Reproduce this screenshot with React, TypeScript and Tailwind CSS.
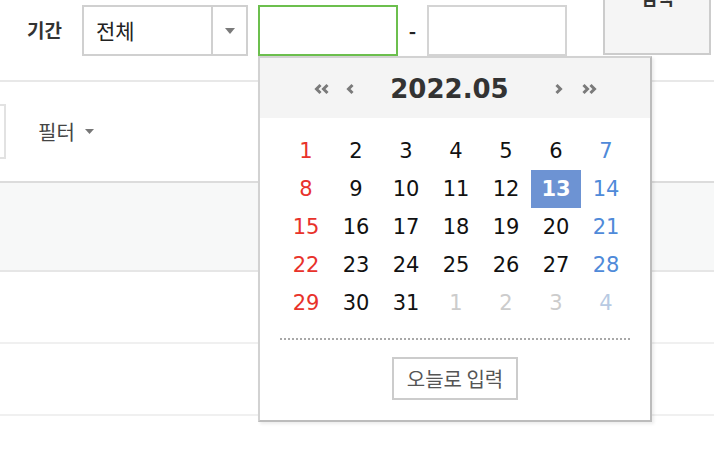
import React from "react";

const KR = "font-['Noto_Sans_CJK_KR',sans-serif]";
const NUM = "font-['DejaVu_Sans','Noto_Sans_CJK_KR',sans-serif]";

type Day = { n: number; tone: "sun" | "sat" | "day" | "next" | "nextSat"; today?: boolean };

const weeks: Day[][] = (() => {
  const rows: Day[][] = [];
  let n = 1;
  for (let w = 0; w < 5; w++) {
    const row: Day[] = [];
    for (let d = 0; d < 7; d++) {
      if (n <= 31) {
        row.push({ n, tone: d === 0 ? "sun" : d === 6 ? "sat" : "day", today: n === 13 });
      } else {
        row.push({ n: n - 31, tone: d === 6 ? "nextSat" : "next" });
      }
      n++;
    }
    rows.push(row);
  }
  return rows;
})();

const TONE: Record<Day["tone"], string> = {
  sun: "text-[#e8322b]",
  sat: "text-[#4f8ad9]",
  day: "text-[#111]",
  next: "text-[#cccccc]",
  nextSat: "text-[#b8cae3]",
};

function Chevron({ double, right }: { double?: boolean; right?: boolean }) {
  const w = double ? 15 : 8;
  return (
    <svg width={w} height="12" viewBox={`0 0 ${w} 12`}>
      <g fill="none" stroke="#7a7a7a" strokeWidth="3" strokeLinejoin="miter">
        {right ? (
          <>
            <path d="M1.5 2 L5.5 6 L1.5 10" />
            {double && <path d="M8.5 2 L12.5 6 L8.5 10" />}
          </>
        ) : (
          <>
            <path d="M6.5 2 L2.5 6 L6.5 10" />
            {double && <path d="M13.5 2 L9.5 6 L13.5 10" />}
          </>
        )}
      </g>
    </svg>
  );
}

function Calendar() {
  return (
    <div className="absolute left-[258px] top-[56px] w-[394px] h-[366px] bg-white border-2 border-[#d2d2d2] border-r-[#bcbcbc] border-b-[#bcbcbc] shadow-[2px_2px_3px_rgba(0,0,0,0.08)]">
      <div className="flex items-center h-[60px] pt-[2px] bg-[#f4f4f4]">
        <div className="ml-[48px] w-[26px] flex justify-center">
          <Chevron double />
        </div>
        <div className="ml-[12px] w-[8px] flex justify-center">
          <Chevron />
        </div>
        <div className="ml-[36px] w-[119px] text-center font-['DejaVu_Sans',sans-serif] font-bold text-[26px] leading-[30px] text-[#333]">
          2022.05
        </div>
        <div className="ml-[46px] w-[8px] flex justify-center">
          <Chevron right />
        </div>
        <div className="ml-[19px] w-[15px] flex justify-center">
          <Chevron double right />
        </div>
      </div>
      <div className="pl-[21px] pt-[14px]">
        {weeks.map((row, i) => (
          <div key={i} className="flex">
            {row.map((d, j) => (
              <div
                key={j}
                className={`w-[50px] h-[38px] pt-[2px] flex items-center justify-center ${NUM} text-[21px] ${
                  d.today ? "bg-[#6d93d3] text-white font-bold" : TONE[d.tone]
                }`}
              >
                {d.n}
              </div>
            ))}
          </div>
        ))}
      </div>
      <div className="mx-[20px] mt-[16px] border-t-2 border-dotted border-[#a8a8a8]" />
      <div className="flex justify-center mt-[17px]">
        <button
          type="button"
          className={`w-[126px] h-[43px] border-2 border-[#cccccc] bg-white ${KR} text-[20px] text-[#555] leading-none`}
        >
          오늘로 입력
        </button>
      </div>
    </div>
  );
}

export default function App() {
  return (
    <div className={`relative w-[714px] h-[458px] overflow-hidden bg-white ${KR}`}>
      <div className="flex items-start h-[82px] pt-[5px] border-b-2 border-[#e8e8e8]">
        <div className="ml-[27px] w-[55px] h-[51px] flex items-center text-[19px] font-bold text-[#333]">기간</div>
        <div className="flex w-[166px] h-[51px] border-2 border-[#d0d0d0] bg-white">
          <div className="flex-1 flex items-center pl-[12px] text-[21px] text-[#222] border-r-2 border-[#d0d0d0]">전체</div>
          <div className="w-[33px] flex items-center justify-center">
            <svg width="10" height="6" viewBox="0 0 10 6">
              <path d="M0 0 H10 L5 6 Z" fill="#7a7a7a" />
            </svg>
          </div>
        </div>
        <div className="ml-[10px] w-[140px] h-[51px] border-2 border-[#6cbf4e] bg-white" />
        <div className="w-[29px] h-[51px] flex items-center justify-center text-[20px] font-bold text-[#222]">-</div>
        <div className="w-[140px] h-[51px] border-2 border-[#d4d4d4] bg-white" />
        <button
          type="button"
          className="ml-[36px] -mt-[22px] w-[108px] h-[72px] flex justify-center pt-[1px] border-2 border-[#cccccc] bg-[#f5f5f5] text-[18px] font-bold leading-[22px] text-[#333]"
        >
          검색
        </button>
      </div>
      <div className="flex items-center h-[101px] border-b-2 border-[#dcdcdc]">
        <div className="-ml-[54px] w-[60px] h-[55px] border-2 border-[#e2e2e2]" />
        <div className="ml-[32px] text-[20px] text-[#444]">필터</div>
        <svg className="ml-[10px]" width="9" height="5" viewBox="0 0 9 5">
          <path d="M0 0 H9 L4.5 5 Z" fill="#777" />
        </svg>
      </div>
      <div className="h-[89px] bg-[#f7f8f8] border-b-2 border-[#e6e6e6]" />
      <div className="h-[72px] border-b-2 border-[#f0f0f0]" />
      <div className="h-[72px] border-b-2 border-[#f0f0f0]" />
      <Calendar />
    </div>
  );
}
